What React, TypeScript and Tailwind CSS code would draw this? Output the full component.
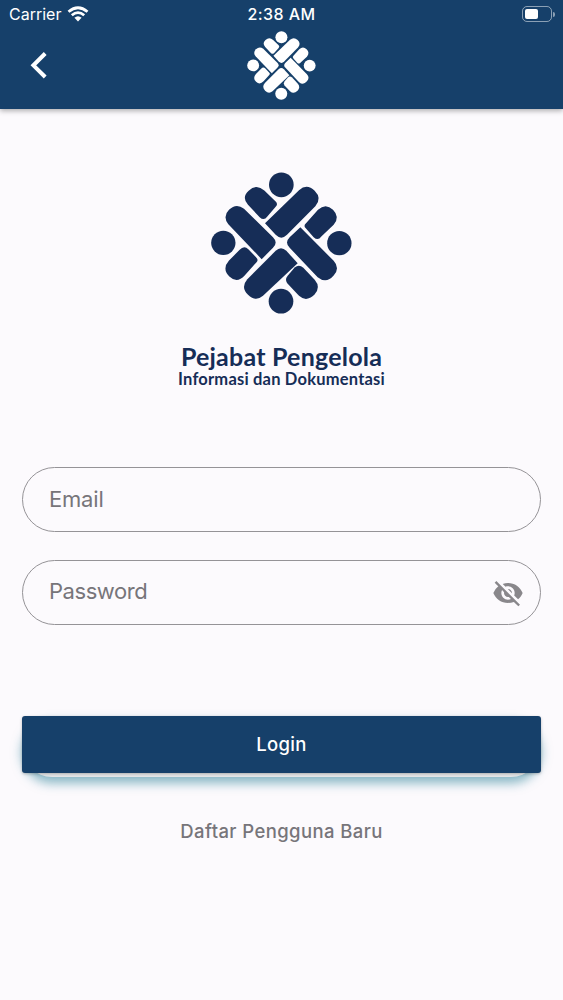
import { useState } from "react"
import { MdVisibility, MdVisibilityOff } from "react-icons/md"

function KnotLogo({ className }: { className?: string }) {
  return (
    <svg viewBox="34 37 423 425" className={className} fill="currentColor" aria-hidden="true">
      <circle cx="245" cy="75" r="37" />
      <circle cx="71" cy="249" r="36.5" />
      <circle cx="419" cy="250" r="36.5" />
      <circle cx="244" cy="424" r="37" />
      {/* long bars */}
      <path d="M196 190L298 91Q322 70 345 93Q368 116 347 139L262 225Q245 242 228 225Z" />
      <path d="M186 298L86 193Q68 170 88 150Q110 128 133 147L220 232Q236 248 220 264Z" />
      <path d="M294 310L190 408Q168 427 145 405Q122 382 143 358L228 273Q244 258 260 273Z" />
      <path d="M302 202L402 303Q422 325 402 347Q380 373 354 352L270 264Q254 248 270 232Z" />
      {/* short bars */}
      <path d="M145 135Q125 113 147 93Q170 70 194 92L228 125Q236 133 228 141L203 170Q193 184 180 172Z" />
      <path d="M319 190L355 150Q378 128 400 150Q422 172 402 195L365 230Q355 244 342 232L319 206Q310 198 319 190Z" />
      <path d="M170 308L135 347Q112 372 89 350Q66 327 88 302L120 270Q133 256 146 268L169 292Q178 300 170 308Z" />
      <path d="M285 323Q298 312 311 324L345 360Q365 383 344 405Q320 428 298 408L264 372Q254 360 264 348Z" />
    </svg>
  )
}

function StatusBar() {
  return (
    <div className="grid h-7 grid-cols-3 items-center text-white">
      <div className="flex items-center gap-[6px] pl-[9px]">
        <span className="text-[16px] leading-5">Carrier</span>
        <svg viewBox="0 0 22 16" className="h-4 w-[22px]" fill="none" stroke="currentColor" strokeWidth="2.8">
          <path d="M1.5 5.8Q11 -2.2 20.5 5.8" />
          <path d="M4.8 9.3Q11 4 17.2 9.3" />
          <path d="M7.4 11.7Q11 8.7 14.6 11.7L11 15.4Z" fill="currentColor" stroke="none" />
        </svg>
      </div>
      <span className="text-center text-[16px] font-medium leading-5 tracking-[0.4px]">2:38 AM</span>
      <div className="flex items-center justify-end gap-px pr-[8px]">
        <div className="h-4 w-[30px] rounded-[5px] border border-white/50 p-[2px]">
          <div className="h-full w-[13px] rounded-[2px] bg-white" />
        </div>
        <div className="h-[5px] w-[2px] rounded-r-full bg-white/50" />
      </div>
    </div>
  )
}

export default function App() {
  const [showPassword, setShowPassword] = useState(false)

  return (
    <div className="flex h-[1000px] w-full flex-col bg-[#fcfafd] font-['Inter',sans-serif]">
      <header className="h-[109px] shrink-0 bg-[#16406a] shadow-[0_2px_5px_rgba(0,0,0,0.3)]">
        <StatusBar />
        <div className="grid grid-cols-3 items-start pt-[3px] text-white">
          <button type="button" aria-label="Kembali" className="ml-[29px] mt-[20px] w-5">
            <svg viewBox="0 0 20 28" className="h-7 w-5" fill="none" stroke="currentColor" strokeWidth="4">
              <path d="M16.2 2.5L4.4 14.3L16.2 26" />
            </svg>
          </button>
          <KnotLogo className="h-[69px] w-[69px] justify-self-center" />
        </div>
      </header>

      <main className="flex flex-col px-[22px] pt-[63px]">
        <div className="flex flex-col items-center font-['Lato',sans-serif] font-bold text-[#162d57]">
          <KnotLogo className="h-[142px] w-[141px]" />
          <h1 className="mt-[30px] whitespace-nowrap text-[25px] leading-[24px] tracking-[0.22px]">Pejabat Pengelola</h1>
          <p className="mt-[2px] whitespace-nowrap text-[16.5px] leading-[18px] tracking-[0.2px]">Informasi dan Dokumentasi</p>
        </div>

        <form className="mt-[79px] flex flex-col" onSubmit={(e) => e.preventDefault()}>
          <input
            type="email"
            placeholder="Email"
            className="h-[65px] rounded-full border border-[#959397] bg-transparent px-[26px] pb-[2px] text-[22px] tracking-[-0.2px] outline-none placeholder:text-[#77757a]"
          />
          <div className="mt-7 flex h-[65px] items-center rounded-full border border-[#959397] pl-[26px] pr-4">
            <input
              type={showPassword ? "text" : "password"}
              placeholder="Password"
              className="min-w-0 flex-1 bg-transparent pb-[2px] text-[22px] tracking-[-0.45px] outline-none placeholder:text-[#77757a]"
            />
            <button type="button" aria-label="Password" onClick={() => setShowPassword(!showPassword)}>
              {showPassword ? (
                <MdVisibility className="size-8 text-[#89878b]" />
              ) : (
                <MdVisibilityOff className="size-8 text-[#89878b]" />
              )}
            </button>
          </div>

          <div className="mt-[91px] h-[61px] rounded-[30px] bg-[#e4e6e8] shadow-[0_6px_11px_rgba(36,126,150,0.55)]">
            <button
              type="submit"
              className="h-[57px] w-full rounded-[3px] bg-[#16406a] text-[18.5px] font-medium tracking-[0.3px] text-white shadow-[0_1px_3px_rgba(0,0,0,0.25)]"
            >
              Login
            </button>
          </div>
        </form>

        <a className="mt-[41px] self-center text-[18.5px] font-[480] leading-[26px] tracking-[0.4px] text-[#77757a]">
          Daftar Pengguna Baru
        </a>
      </main>
    </div>
  )
}
